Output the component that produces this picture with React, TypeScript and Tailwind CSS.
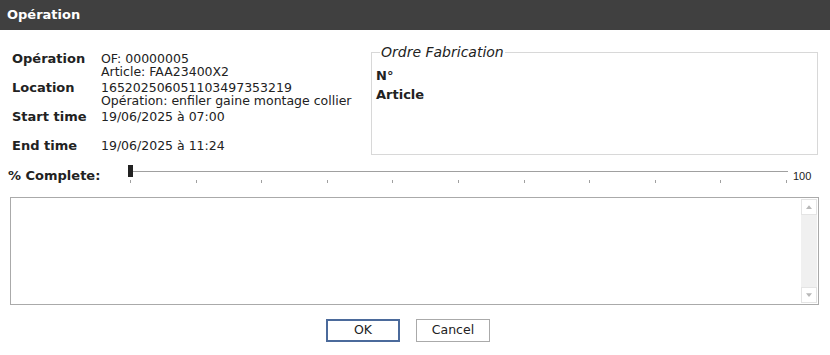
const TICKS = Array.from({ length: 11 }, (_, i) => i);

function Row({ label, lines }: { label: string; lines: string[] }) {
  return (
    <div className="flex h-[29px]">
      <div className="w-[89px] shrink-0 text-[13px] font-bold leading-[13px]">{label}</div>
      <div className="leading-[13px]">
        {lines.map((line) => (
          <div key={line}>{line}</div>
        ))}
      </div>
    </div>
  );
}

export default function App() {
  return (
    <div
      className="h-[355px] w-[830px] overflow-hidden bg-white text-[12.5px] text-[#222]"
      style={{ fontFamily: '"DejaVu Sans", Verdana, sans-serif' }}
    >
      <header className="flex h-[30px] items-center bg-[#404040] px-[7px]">
        <span className="text-[13px] font-bold text-white">Opération</span>
      </header>

      <div className="flex pt-[22px]">
        <div className="w-[371px] shrink-0 pl-[12px]">
          <Row label="Opération" lines={['OF: 00000005', 'Article: FAA23400X2']} />
          <Row label="Location" lines={['165202506051103497353219', 'Opération: enfiler gaine montage collier']} />
          <Row label="Start time" lines={['19/06/2025 à 07:00']} />
          <Row label="End time" lines={['19/06/2025 à 11:24']} />
        </div>

        <fieldset className="-mt-[7px] h-[110px] w-[447px] border border-[#d8d8d8] px-[4px]">
          <legend className="ml-[4px] px-[1px] text-[14px] italic leading-[15px]">Ordre Fabrication</legend>
          <div className="mt-[6px] text-[13px] font-bold leading-[19px]">N°</div>
          <div className="text-[13px] font-bold leading-[19px]">Article</div>
        </fieldset>
      </div>

      <div className="-mt-[7px] flex items-start">
        <div className="w-[120px] shrink-0 pl-[8px] pt-[5px] text-[13px] font-bold">% Complete:</div>
        <div className="relative ml-[8px] h-[24px] w-[660px]">
          <div className="absolute left-[2px] top-[10px] h-[1px] w-[658px] bg-[#a0a0a0]" />
          {TICKS.map((i) => (
            <div
              key={i}
              className="absolute top-[19px] h-[3px] w-[1px] bg-[#a0a0a0]"
              style={{ left: 2 + i * 65.6 }}
            />
          ))}
          <div className="absolute left-0 top-[4px] h-[12px] w-[5px] bg-[#222]" />
        </div>
        <span
          className="ml-[5px] pt-[9px] text-[11px] leading-[13px] text-[#222]"
          style={{ fontFamily: '"Liberation Sans", Arial, sans-serif' }}
        >
          100
        </span>
      </div>

      <div className="mx-[10px] mt-[11px] flex h-[108px] w-[809px] border border-[#aaa] bg-white">
        <div className="flex-1" />
        <div className="m-[1px] flex w-[16px] flex-col justify-between bg-[#f0f0f0]">
          <div className="flex h-[16px] items-center justify-center border border-[#e4e4e4] bg-white">
            <svg viewBox="0 0 8 5" className="h-[4px] w-[6px]">
              <path d="M0 5 L4 0 L8 5 Z" fill="#b8b8b8" />
            </svg>
          </div>
          <div className="flex h-[16px] items-center justify-center border border-[#e4e4e4] bg-white">
            <svg viewBox="0 0 8 5" className="h-[4px] w-[6px]">
              <path d="M0 0 L4 5 L8 0 Z" fill="#b8b8b8" />
            </svg>
          </div>
        </div>
      </div>

      <div className="mt-[14px] flex gap-[16px] pl-[326px]">
        <button className="h-[23px] w-[74px] border-2 border-[#4b6a9b] bg-white text-[12.5px] text-[#222]">
          OK
        </button>
        <button className="h-[23px] w-[74px] border border-[#aaa] bg-white text-[12.5px] text-[#222]">
          Cancel
        </button>
      </div>
    </div>
  );
}
